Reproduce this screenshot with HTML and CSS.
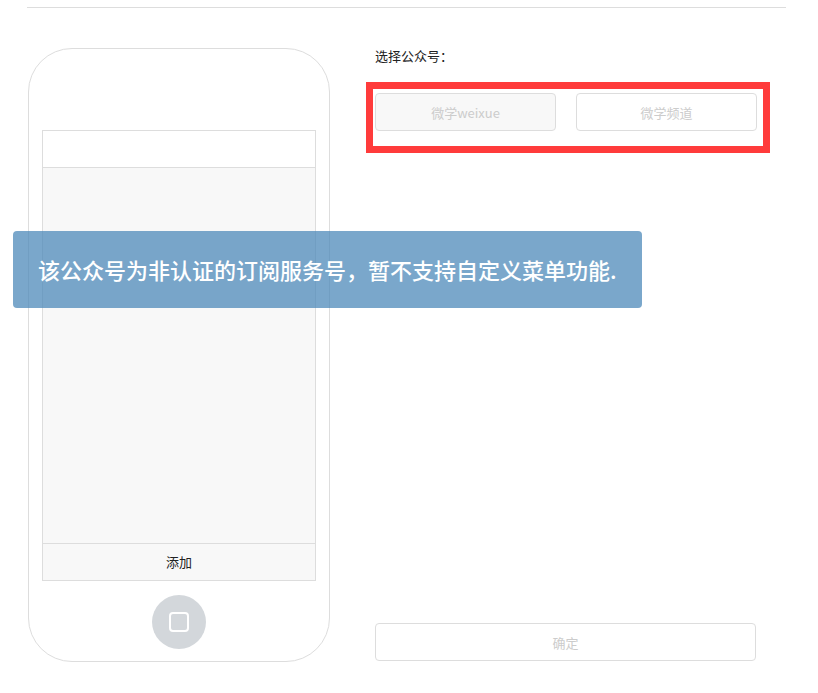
FILE: index.html
```html
<!doctype html>
<html lang="zh-cn">

<head>
    <meta charset="utf-8">
    <title>自定义菜单</title>
    <link rel="stylesheet" href="styles.css">
</head>

<body>
    <div class="page">
        <div class="topbar"></div>

        <div class="main">
            <div class="phone">
                <div class="screen">
                    <div class="screen-head"></div>
                    <div class="screen-body"></div>
                    <div class="screen-foot">添加</div>
                </div>
                <div class="home"><span></span></div>
            </div>

            <div class="panel">
                <div class="label">选择公众号：</div>
                <div class="accounts">
                    <button type="button" class="account on">微学weixue</button>
                    <button type="button" class="account">微学频道</button>
                </div>
                <button type="button" class="confirm">确定</button>
            </div>
        </div>

        <div class="toast">该公众号为非认证的订阅服务号，暂不支持自定义菜单功能.</div>
    </div>
</body>

</html>
```

FILE: styles.css
```css
body {
    margin: 0;
    background: #fff;
    font-family: "Noto Sans CJK SC", "Liberation Sans", sans-serif;
    color: #333;
}
.page {
    position: relative;
    width: 818px;
    height: 693px;
}
.topbar {
    height: 7px;
    margin: 0 32px 0 27px;
    border-bottom: 1px solid #ddd;
}
.main {
    display: flex;
    align-items: flex-start;
    margin-top: 40px;
    padding-left: 28px;
}

/* telefone */
.phone {
    width: 274px;
    height: 531px;
    padding: 81px 13px 0 13px;
    border: 1px solid #ddd;
    border-radius: 44px;
}
.screen {
    border: 1px solid #ddd;
    height: 449px;
    display: flex;
    flex-direction: column;
}
.screen-head {
    height: 36px;
    background: #fff;
    border-bottom: 1px solid #ddd;
}
.screen-body {
    flex: 1;
    background: #f8f8f8;
}
.screen-foot {
    height: 36px;
    line-height: 36px;
    border-top: 1px solid #ddd;
    background: #f8f8f8;
    text-align: center;
    font-size: 13px;
    color: #222;
}
.home {
    width: 54px;
    height: 54px;
    margin: 14px auto 0 auto;
    border-radius: 50%;
    background: #d3d7db;
    display: flex;
    align-items: center;
    justify-content: center;
}
.home span {
    width: 16px;
    height: 16px;
    border: 2px solid #fff;
    border-radius: 4px;
}

/* lado direito */
.panel {
    margin-left: 45px;
    width: 381px;
    height: 613px;
    display: flex;
    flex-direction: column;
}
.label {
    font-size: 13px;
    line-height: 16px;
    color: #222;
}
.accounts {
    margin: 18px 0 0 -9px;
    width: 382px;
    padding: 4px 6px 15px 2px;
    border: 7px solid #ff3b3b;
    display: flex;
    gap: 20px;
}
.account {
    width: 181px;
    height: 38px;
    border: 1px solid #ddd;
    border-radius: 4px;
    background: #fff;
    color: #ccc;
    font-family: inherit;
    font-size: 13px;
}
.account.on {
    background: #f8f8f8;
}
.confirm {
    margin-top: auto;
    width: 381px;
    height: 38px;
    border: 1px solid #ddd;
    border-radius: 4px;
    background: #fff;
    color: #ccc;
    font-family: inherit;
    font-size: 13px;
}

.toast {
    position: absolute;
    left: 13px;
    top: 231px;
    width: 604px;
    height: 77px;
    padding-left: 25px;
    line-height: 77px;
    border-radius: 4px;
    background: rgba(72, 135, 184, 0.73);
    color: #fff;
    font-size: 22px;
    font-weight: 500;
    white-space: nowrap;
}
```
